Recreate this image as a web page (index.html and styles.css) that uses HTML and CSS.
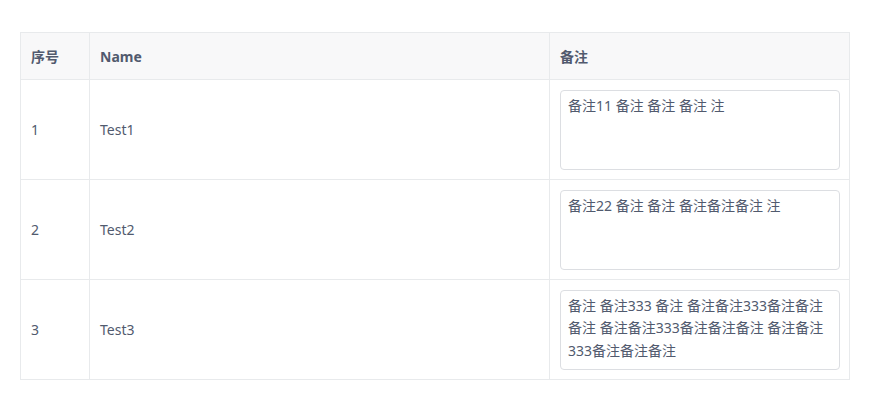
FILE: index.html
```html
<!DOCTYPE html>
<html lang="zh-CN">
<head>
<meta charset="utf-8">
<title>Table</title>
<link rel="stylesheet" href="styles.css">
</head>
<body>
<div class="page">
  <table class="grid">
    <colgroup>
      <col class="c-idx">
      <col class="c-name">
      <col class="c-note">
    </colgroup>
    <thead>
      <tr>
        <th>序号</th>
        <th>Name</th>
        <th>备注</th>
      </tr>
    </thead>
    <tbody>
      <tr>
        <td>1</td>
        <td>Test1</td>
        <td class="note"><textarea class="ta">备注11 备注 备注 备注 注</textarea></td>
      </tr>
      <tr>
        <td>2</td>
        <td>Test2</td>
        <td class="note"><textarea class="ta">备注22 备注 备注 备注备注备注 注</textarea></td>
      </tr>
      <tr>
        <td>3</td>
        <td>Test3</td>
        <td class="note"><textarea class="ta">备注 备注333 备注 备注备注333备注备注备注 备注备注333备注备注备注 备注备注333备注备注备注</textarea></td>
      </tr>
    </tbody>
  </table>
</div>
</body>
</html>
```
FILE: styles.css
```css
html, body {
  margin: 0;
  padding: 0;
  background: #fff;
}
body {
  font-family: "Noto Sans", "Noto Sans CJK SC", sans-serif;
  font-size: 14px;
  color: #515a6e;
}
.page {
  padding: 32px 23px 0 20px;
}
.grid {
  width: 830px;
  border-collapse: separate;
  border-spacing: 0;
  table-layout: fixed;
  border-top: 1px solid #e8eaec;
  border-left: 1px solid #e8eaec;
}
.c-idx { width: 69px; }
.c-name { width: 460px; }
.c-note { width: 300px; }
th, td {
  border-right: 1px solid #e8eaec;
  border-bottom: 1px solid #e8eaec;
  padding: 0 10px;
  text-align: left;
  vertical-align: middle;
  box-sizing: border-box;
}
th {
  height: 47px;
  background: #f8f8f9;
  font-weight: 700;
  font-size: 14px;
}
td {
  height: 100px;
  font-weight: 400;
}
td.note {
  padding: 10px 10px 9px 10px;
  vertical-align: top;
}
.ta {
  display: block;
  box-sizing: border-box;
  width: 280px;
  height: 80px;
  margin: 0;
  padding: 4px 7px;
  border: 1px solid #dcdee2;
  border-radius: 4px;
  font-family: "Noto Sans", "Noto Sans CJK SC", sans-serif;
  font-size: 14px;
  line-height: 22.4px;
  color: #515a6e;
  background: #fff;
  resize: none;
  overflow: hidden;
  outline: none;
}
```
